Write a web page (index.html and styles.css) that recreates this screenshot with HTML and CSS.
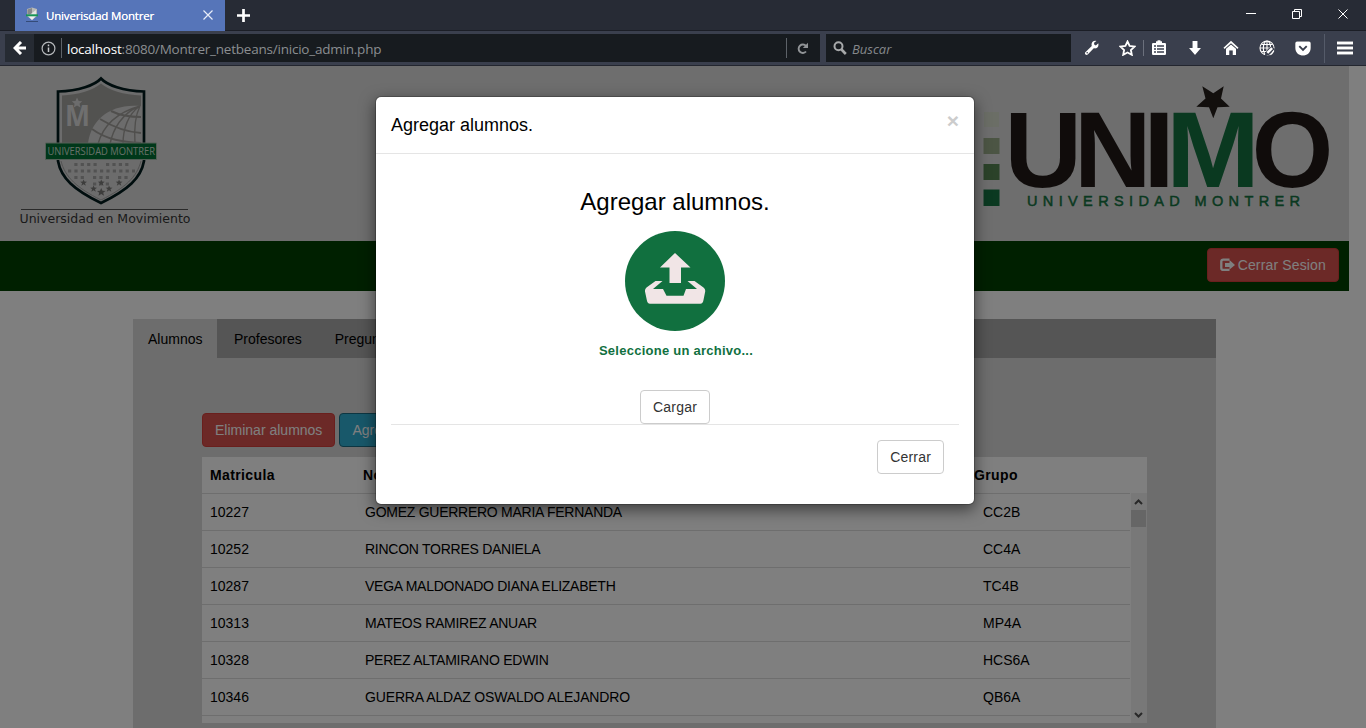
FILE: index.html
```html
<!DOCTYPE html>
<html lang="es">
<head>
<meta charset="utf-8">
<title>Univerisdad Montrer</title>
<link rel="stylesheet" href="styles.css">
</head>
<body>
<div class="browser">
  <div class="tabstrip">
    <div class="tab">
      <svg class="favicon" width="16" height="16" viewBox="0 0 16 16"><path d="M3 2 8 .5 13 2v7L8 13 3 9z" fill="#b9bbb8"/><path d="M3.5 2.5 8 1v6H3.500z" fill="#85888a"/><path d="M8 6 12 3v5H6z" fill="#e4e5e2"/><path d="M4 9h8l-4 4z" fill="#eee"/><path d="M2 7.300h12v2H2z" fill="#169456"/><path d="M2 14.500h12" stroke="#344b78"/></svg>
      <span class="tab-title">Univerisdad Montrer</span>
      <svg class="tab-close" width="10" height="10" viewBox="0 0 10 10"><path d="M.5.500l9 9m0-9-9 9" stroke="#e8edf8" stroke-width="1.200"/></svg>
    </div>
    <svg class="newtab" width="13" height="13" viewBox="0 0 13 13"><path d="M6.500 0v13M0 6.500h13" stroke="#fff" stroke-width="2.700"/></svg>
    <div class="wincontrols">
      <svg width="10" height="10" viewBox="0 0 10 10"><path d="M0 4.500h10" stroke="#fff"/></svg>
      <svg width="10" height="10" viewBox="0 0 10 10"><path d="M.5 2.500h7v7h-7zM2.500 2.500v-2h7v7h-2" fill="none" stroke="#fff"/></svg>
      <svg width="10" height="10" viewBox="0 0 10 10"><path d="M.5.500l9 9m0-9-9 9" stroke="#fff"/></svg>
    </div>
  </div>
  <div class="toolbar">
    <div class="back"><svg width="14" height="14" viewBox="0 0 14 14"><path d="M8 1 2 7l6 6M3 7h10" fill="none" stroke="#fff" stroke-width="3"/></svg></div>
    <div class="urlbar">
      <svg width="15" height="15" viewBox="0 0 15 15"><circle cx="7.500" cy="7.500" r="6.400" fill="none" stroke="#b5b8bb" stroke-width="1.200"/><path d="M7.500 6.500v4.500M7.500 3.600v1.700" stroke="#c5c8ca" stroke-width="1.500"/></svg>
      <span class="vline"></span>
      <span class="url"><b>localhost</b>:8080/Montrer_netbeans/inicio_admin.php</span>
      <span class="vline"></span>
      <svg class="reload" width="12" height="13" viewBox="0 0 12 13"><path d="M9 9.500A4.200 4.200 0 1 1 9 4" fill="none" stroke="#919497" stroke-width="1.900"/><path d="M11 .8V6H5.800z" fill="#919497"/></svg>
    </div>
    <div class="search">
      <svg width="14" height="14" viewBox="0 0 14 14"><circle cx="5.500" cy="5.300" r="4" fill="none" stroke="#a7a9aa" stroke-width="2"/><path d="m8.500 8.500 4.300 4.500" stroke="#a7a9aa" stroke-width="2.600"/></svg>
      <span>Buscar</span>
    </div>
    <div class="tools">
      <svg width="16" height="16" viewBox="0 0 16 16"><path d="M14.300 3.300 11.800 5.500 10 4.300l.3-1.800L12.500.900C9.800 0 7.400 1.800 7.500 4.500L7.700 6 1.300 12.200c-1.300 1.700 1 3.700 2.500 2.300L9.800 8.300c3 .8 5.500-1.800 4.500-5z" fill="#fff"/><circle cx="3.200" cy="12.800" r=".8" fill="#3a3f4d"/></svg>
      <svg class="t-star" width="17" height="16" viewBox="0 0 17 16"><path d="m8.500 1.500 2.100 4.400 4.900.7-3.600 3.400.9 4.800-4.300-2.300-4.300 2.300.9-4.800-3.600-3.400 4.900-.7z" fill="none" stroke="#fff" stroke-width="1.900"/></svg>
      <svg class="t-list" width="16" height="16" viewBox="0 0 16 16"><path d="M2 3h3V1.200h1.500V.2h3v1H11V3h3q1 0 1 1v10q0 1-1 1H2q-1 0-1-1V4q0-1 1-1z" fill="#fff"/><path d="M3 6h2m1 0h7M3 9h2m1 0h7M3 12h2m1 0h7" stroke="#3a3f4d" stroke-width="1.300"/></svg>
      <svg class="t-down" width="14" height="16" viewBox="0 0 14 16"><path d="M4.500 1h5v7H13l-6 7-6-7h3.500z" fill="#fff"/></svg>
      <svg class="t-home" width="16" height="16" viewBox="0 0 16 16"><path d="M1 8.300 8 2l7 6.300" fill="none" stroke="#fff" stroke-width="1.700"/><path d="M3 8.800 8 4.400l5 4.400V15H9.700v-4.500H6.300V15H3z" fill="#fff"/></svg>
      <svg class="t-globe" width="17" height="17" viewBox="0 0 17 17"><g fill="none" stroke="#fff" stroke-width="1.200"><circle cx="8" cy="8" r="7"/><path d="M1 8h14M2.500 4.500h11M2.500 11.500h11M8 1v14"/><ellipse cx="8" cy="8" rx="3.700" ry="7"/></g><path d="m5.500 16.500 1.200-4.500L12.500 6l3.500 3-6 6z" fill="#3a3f4d"/><path d="m7.500 12 4.800-4.800 1.700 1.700L9.200 13.700zM14.800 10l-4.300 5.500 2.500-.9 2.200-3z" fill="#fff"/></svg>
      <svg class="t-pocket" width="16" height="15" viewBox="0 0 16 15"><path d="M2 .5h12q1.700 0 1.700 1.700V7c0 10-15.400 10-15.400 0V2.200Q.3.500 2 .5z" fill="#fff"/><path d="m4.300 5.200 3.700 3.700 3.700-3.700" fill="none" stroke="#3a3f4d" stroke-width="1.900"/></svg>
      <svg class="t-menu" width="16" height="14" viewBox="0 0 16 14"><path d="M0 2h16M0 7h16M0 12h16" stroke="#fff" stroke-width="3"/></svg>
      <i class="sep sep-bookmark"></i><i class="sep sep-menu"></i>
    </div>
  </div>
</div>

<div class="viewport">
  <header class="banner">
    <svg class="shield" width="180" height="160" viewBox="15 71 180 160">
      <path d="M101 78.500C95 85 79 91 58 91.500V161c3 17 16 29 43 42 27-13 40-25 43-42V91.500C123 91 107 85 101 78.500z" fill="#d8d8d8" stroke="#001a1c" stroke-width="2.700"/>
      <path d="M101 83.500C94 90 78 95 62 95.500V143h79V95.500C124 95 108 90 101 83.500z" fill="#a5a4a0"/>
      <path d="M61 161c4 16 16 27 40 39 24-12 36-23 40-39" fill="none" stroke="#a6a6a6"/>
      <path d="M88 143c3-23 22-40 53-37v37z" fill="#d9d9d9"/>
      <g fill="none" stroke="#a19f9b" stroke-width="1.400"><path d="M98 144c5-18 17-31 42-38M110 144c3-15 12-31 30-38M123 144c0-15 5-30 17-38M135 144c-1-14 0-28 5-38"/><path d="M92 129c15 11 31 13 49 14M100 119c13 8 26 13 41 14M111 111c10 5 19 6 30 6" stroke-width="2"/></g>
      <text x="65" y="126" class="shield-m" textLength="25" lengthAdjust="spacingAndGlyphs">M</text>
      <path d="m77 97.500 1.700 3.500 3.500.2-2.700 2.500 1 3.700-3.500-2-3.200 2 .8-3.700-2.800-2.500 3.700-.2z" fill="#d9d9d9"/>
      <g stroke="#a5a5a5" stroke-width="3.200" stroke-dasharray="3.200 3.200"><path d="M74.300 164.500H97M106 164.500h23M68 171h67M74.300 177.500h10M93 177.500h16M118 177.500h10M93 184h16"/></g>
      <g fill="#7b7b79"><path id="star" d="m83.500 179.500 1 2 2.500.2-2 1.500.8 2.500-2.300-1.400-2.200 1.400.8-2.500-1.900-1.500 2.500-.2z"/><use href="#star" x="35.500"/><use href="#star" x="10" y="6"/><use href="#star" x="25.500" y="6"/><use href="#star" x="17.700"/><path d="m101.200 188 1.300 2.700 3 .2-2.300 1.900.9 3-2.900-1.700-2.700 1.700.7-3-2.200-1.900 3-.2z"/></g>
      <path d="M45.500 143h111v16.500h-111z" fill="#007034" stroke="#a8bfae"/>
      <text x="47.500" y="155.200" class="shield-ribbon" textLength="107.500" lengthAdjust="spacingAndGlyphs">UNIVERSIDAD MONTRER</text>
      <path d="M21 209.500h167" stroke="#555"/>
      <text x="19.500" y="223.300" class="shield-motto" textLength="171" lengthAdjust="spacingAndGlyphs">Universidad en Movimiento</text>
    </svg>
    <svg class="unimo" width="356" height="130" viewBox="980 82 356 130">
      <path d="M984 112h15v15h-15z" fill="#d6dccd"/><path d="M983.500 138h16v16h-16z" fill="#99aa89"/><path d="M983.500 164h16v16h-16z" fill="#568452"/><path d="M983.500 189.500h16V206h-16z" fill="#167342"/>
      <g class="unimo-word">
        <text x="1004.500" y="187" textLength="77.500" lengthAdjust="spacingAndGlyphs">U</text>
        <text x="1074" y="187" textLength="77.500" lengthAdjust="spacingAndGlyphs">N</text>
        <text x="1143" y="187" textLength="32" lengthAdjust="spacingAndGlyphs">I</text>
        <text x="1166" y="187" textLength="94" lengthAdjust="spacingAndGlyphs" class="green">M</text>
        <text x="1251.700" y="187" textLength="81.500" lengthAdjust="spacingAndGlyphs">O</text>
      </g>
      <path d="M1202.300 86.300 1213.300 93.300 1223.700 86.300 1221 98.500 1229.700 106.700 1217.500 107.300 1213.300 118.300 1209 107.300 1196.300 106.700 1205.500 98.500z" fill="#241e1b"/>
      <text x="1027" y="206" class="unimo-sub" textLength="273">UNIVERSIDAD MONTRER</text>
    </svg>
  </header>
  <nav class="navbar">
    <button class="btn danger logout"><svg width="15" height="14" viewBox="0 0 15 14"><path d="M9.500 1.600H3.300Q1.300 1.600 1.300 3.600v6.300q0 2 2 2h6.200" fill="none" stroke="#fff" stroke-width="2.300"/><path d="M5 5h4.500V2L15 7l-5.500 4.500V9H5z" fill="#fff"/></svg> Cerrar Sesion</button>
  </nav>
  <main class="panel">
    <ul class="tabs"><li class="active">Alumnos</li><li>Profesores</li><li>Preguntas</li></ul>
    <section class="content">
      <div class="actions"><button class="btn danger">Eliminar alumnos</button><button class="btn info">Agregar alumnos</button></div>
      <div class="table">
        <div class="thead"><span>Matricula</span><span>Nombre</span><span>Grupo</span></div>
        <div class="tbody">
          <div class="rows">
            <div class="row"><span>10227</span><span class="name">GOMEZ GUERRERO MARIA FERNANDA</span><span>CC2B</span></div>
            <div class="row"><span>10252</span><span class="name">RINCON TORRES DANIELA</span><span>CC4A</span></div>
            <div class="row"><span>10287</span><span class="name">VEGA MALDONADO DIANA ELIZABETH</span><span>TC4B</span></div>
            <div class="row"><span>10313</span><span class="name">MATEOS RAMIREZ ANUAR</span><span>MP4A</span></div>
            <div class="row"><span>10328</span><span class="name">PEREZ ALTAMIRANO EDWIN</span><span>HCS6A</span></div>
            <div class="row"><span>10346</span><span class="name long">GUERRA ALDAZ OSWALDO ALEJANDRO</span><span>QB6A</span></div>
            <div class="row"></div>
          </div>
          <div class="scrollbar">
            <svg width="15" height="17" viewBox="0 0 15 17"><path d="m4 11 3.500-3.500L11 11" fill="none" stroke="#505050" stroke-width="2"/></svg>
            <div class="thumb"></div>
            <svg class="down" width="15" height="17" viewBox="0 0 15 17"><path d="m4 7 3.500 3.500L11 7" fill="none" stroke="#505050" stroke-width="2"/></svg>
          </div>
        </div>
      </div>
    </section>
  </main>

  <div class="backdrop">
    <div class="modal">
      <div class="modal-header"><h4>Agregar alumnos.</h4><span class="close">×</span></div>
      <div class="modal-body">
        <h3>Agregar alumnos.</h3>
        <svg width="100" height="100" viewBox="0 0 100 100"><circle cx="50" cy="50" r="50" fill="#11703f"/><path d="M50 22 65.500 36.500H56V52H44.500V36.500H35zM30.500 50H37.500L28 58H38L41.500 64.700H58.500L61 58H72L62.500 50H69.500L78.500 56.500q2 1.500 1.700 4L78.500 69q-.5 3.700-3.200 3.700H25q-2.700 0-3.200-3.700L20 60.500q-.3-2.500 1.500-4z" fill="#f1e5e6"/></svg>
        <strong>Seleccione un archivo...</strong>
        <button class="btn default">Cargar</button>
        <div class="modal-footer"><button class="btn default">Cerrar</button></div>
      </div>
    </div>
  </div>
</div>
</body>
</html>
```
FILE: styles.css
```css
* { box-sizing: border-box; }
body { margin: 0; width: 1366px; height: 728px; overflow: hidden; display: flex; flex-direction: column; font: 14px/20px "Liberation Sans", Arial, sans-serif; color: #000; background: #fff; }
svg { display: block; flex: none; }
h3, h4, ul { margin: 0; padding: 0; font-weight: 400; }

.browser { height: 66px; flex: none; font-family: "Open Sans", "Noto Sans", sans-serif; background: #3a3f4d; border-bottom: 1px solid #23262f; }
.tabstrip { height: 31px; display: flex; align-items: center; background: #272b35; border-bottom: 1px solid #1b1e26; padding-left: 15px; }
.tab { width: 210px; height: 31px; display: flex; align-items: center; background: #5675b9; padding: 0 12px 0 9px; color: #fff; }
.favicon { margin-right: 6px; }
.tab-title { flex: 1; font-size: 11.500px; line-height: 16px; letter-spacing: -.17px; text-shadow: 0 0 .4px #fff; white-space: nowrap; padding-top: 2px; }
.newtab { margin-left: 12px; }
.wincontrols { margin-left: auto; display: flex; gap: 36px; padding: 0 18px 3px 0; }
.toolbar { height: 34px; display: flex; align-items: center; padding-left: 5px; }
.back { width: 29px; height: 28px; display: flex; align-items: center; padding-left: 8px; background: #262b33; }
.urlbar { width: 786px; height: 28px; display: flex; align-items: center; background: #171b1f; padding: 0 11px 0 7px; }
.vline { width: 1px; height: 20px; background: #5d6268; margin: 0 5px; }
.url { flex: 1; padding-top: 1px; font-size: 13.500px; letter-spacing: -.22px; color: #8b8e91; white-space: nowrap; }
.url b { color: #fff; font-weight: 400; }
.reload { margin-left: 5px; }
.search { width: 245px; height: 28px; margin-left: 6px; padding-left: 7px; display: flex; align-items: center; gap: 5px; background: #171b1f; color: #85888b; font-style: italic; font-size: 13px; }
.search span { padding-top: 1px; }
.tools { flex: 1; position: relative; height: 34px; display: flex; align-items: center; padding-left: 13px; }
.tools svg { filter: drop-shadow(0 0 .7px #15181f); }
.t-star { margin-left: 19px; }
.t-list { margin-left: 15px; }
.t-down, .t-home { margin-left: 21px; }
.t-globe { margin-left: 20px; }
.t-pocket { margin-left: 19px; }
.t-menu { margin-left: 26px; }
.sep { position: absolute; width: 1px; background: #6b707c; }
.sep-bookmark { left: 72px; top: 9px; height: 16px; }
.sep-menu { left: 253px; top: 3px; height: 29px; background: #555b69; }

.viewport { flex: 1; min-height: 0; position: relative; overflow: hidden; }
.banner { width: 1349px; height: 175px; background: #ddd; display: flex; justify-content: space-between; padding: 5px 13px 0 15px; }
.unimo { margin-top: 11px; }
.shield-m { font: 700 28px "Open Sans", sans-serif; fill: #dedede; }
.shield-ribbon { font: 11.500px "Open Sans", sans-serif; fill: #d0e0d4; }
.shield-motto { font: 12.500px "DejaVu Sans", sans-serif; fill: #353535; }
.unimo-word { font: 700 107.500px "Liberation Sans", sans-serif; fill: #201916; }
.unimo-word .green { fill: #147341; }
.unimo-sub { font: 14.500px "Liberation Sans", sans-serif; fill: #147341; stroke: #147341; stroke-width: .5px; }
.navbar { width: 1349px; height: 50px; background: #004000; display: flex; justify-content: flex-end; padding: 7px 10px 0 0; }
.btn { height: 34px; display: inline-flex; align-items: center; gap: 3px; padding: 0 12px; font: 14px/20px "Liberation Sans", sans-serif; border: 1px solid #ccc; border-radius: 4px; white-space: nowrap; }
.danger { color: #fff; background: #d9534f; border-color: #d43f3a; }
.logout { letter-spacing: .15px; }
.info { color: #fff; background: #31b0d5; border-color: #1b6d85; }
.default { color: #333; background: #fff; letter-spacing: .2px; }
.panel { width: 1083px; height: 440px; margin: 28px 0 0 133px; background: #dadada; }
.tabs { height: 39px; display: flex; list-style: none; background: #aaa; }
.tabs li { padding: 10px 16px 9px 17px; }
.tabs .active { width: 84px; padding-left: 15px; background: #dadada; }
.content { padding: 55px 69px 0; }
.actions { display: flex; gap: 4px; margin-bottom: 10px; }
.table { width: 945px; background: #fff; }
.thead { height: 36px; display: grid; grid-template-columns: 153px 611px 1fr; padding: 8px 0 0 8px; font-weight: 700; letter-spacing: .38px; }
.tbody { display: flex; height: 230px; overflow: hidden; }
.rows { width: 929px; padding-right: 1px; }
.row { height: 37px; display: grid; grid-template-columns: 155px 618px 1fr; padding: 8px 0 0 8px; border-top: 1px solid #ddd; }
.name { letter-spacing: -.26px; }
.long { letter-spacing: -.15px; }
.scrollbar { width: 16px; display: flex; flex-direction: column; background: #f0f0f0; }
.thumb { width: 15px; height: 17px; background: #cdcdcd; }
.down { margin-top: auto; }

.backdrop { position: absolute; inset: 0; background: rgba(0, 0, 0, .5); padding: 30px 391px 0 375px; }
.modal { height: 409px; background: #fff; background-clip: padding-box; border: 1px solid rgba(0, 0, 0, .2); border-radius: 6px; box-shadow: 0 5px 15px rgba(0, 0, 0, .5); }
.modal-header { height: 57px; display: flex; justify-content: space-between; padding: 15px; border-bottom: 1px solid #e5e5e5; }
.modal-header h4 { font-size: 18px; line-height: 26px; }
.close { font-size: 21px; line-height: 17px; font-weight: 700; color: #ccc; }
.modal-body { display: flex; flex-direction: column; align-items: center; padding: 35px 15px 0; }
.modal-body h3 { font-size: 24px; line-height: 26px; margin-bottom: 16px; }
.modal-body strong { margin: 10px 0 29px; padding-left: 2px; color: #11703f; font: 700 13px/20px "Liberation Sans", sans-serif; letter-spacing: .25px; }
.modal-footer { align-self: stretch; display: flex; justify-content: flex-end; padding: 15px; border-top: 1px solid #e5e5e5; }
```
